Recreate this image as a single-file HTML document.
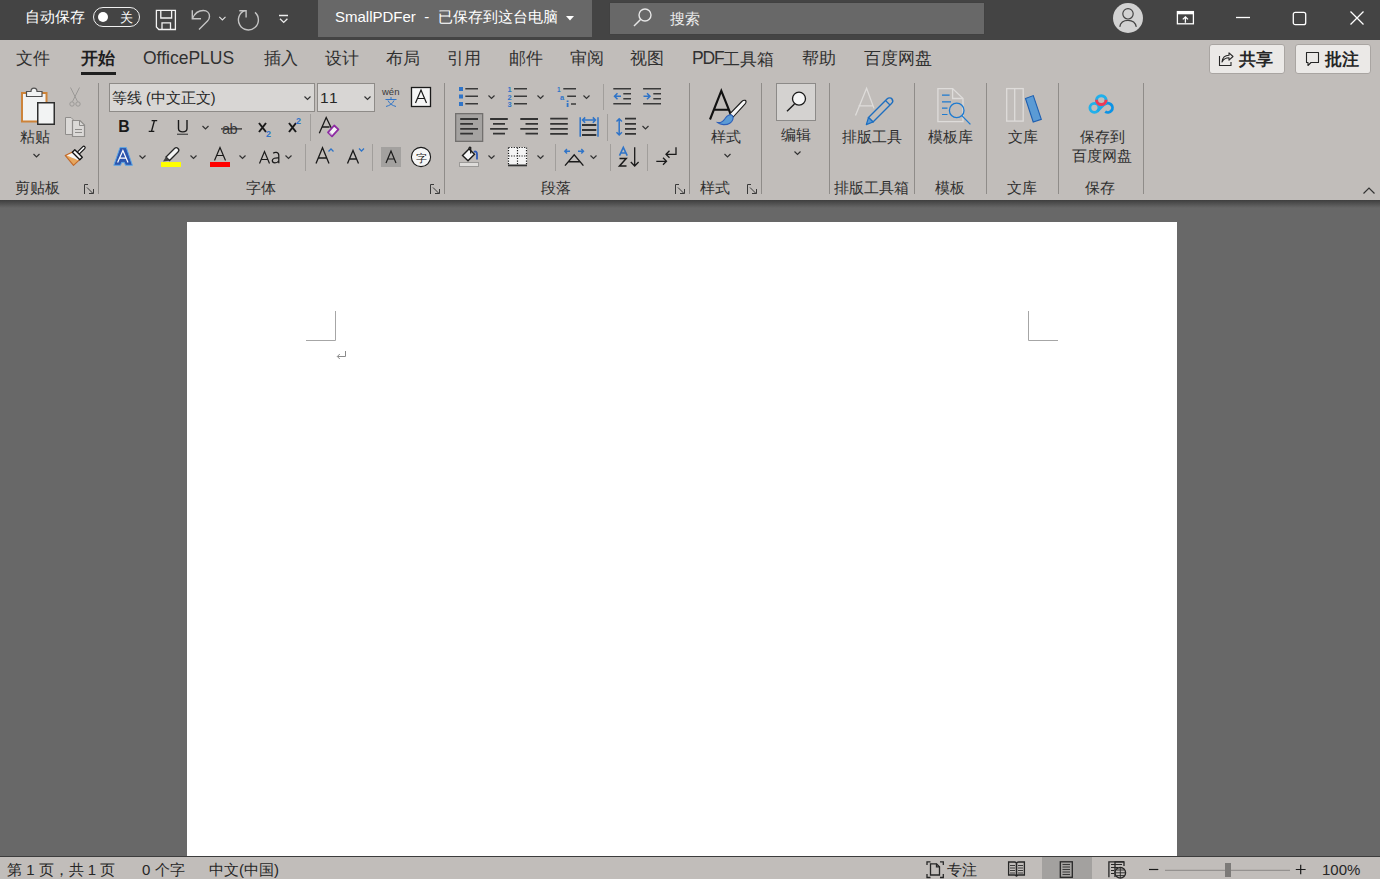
<!DOCTYPE html>
<html><head><meta charset="utf-8">
<style>
*{margin:0;padding:0;box-sizing:border-box}
html,body{width:1380px;height:879px;overflow:hidden;background:#686868}
body{font-family:"Liberation Sans",sans-serif;position:relative;color:#262626}
.a{position:absolute}
.t{position:absolute;white-space:nowrap;line-height:1}
svg{position:absolute;overflow:visible}
#title{left:0;top:0;width:1380px;height:40px;background:#444444}
#tabs{left:0;top:40px;width:1380px;height:38px;background:#c1bdba}
#ribbon{left:0;top:78px;width:1380px;height:122px;background:#c1bdba}
#shadow{left:0;top:200px;width:1380px;height:8px;background:linear-gradient(#3e3e3e,#686868)}
#page{left:187px;top:222px;width:990px;height:634px;background:#fff}
#status{left:0;top:856px;width:1380px;height:23px;background:#c1bdba;border-top:1px solid #3c3c3c}
.tab{font-size:16.7px;color:#303030;top:51px}
.L{font-size:17.5px;position:relative;top:-1px}
.wt{color:#fff}
.sep{position:absolute;width:1px;background:#8f8c89}
.lbl{font-size:15px;color:#303030}
</style></head><body>
<div id="title" class="a"></div>

<!-- TITLE BAR -->
<div class="t wt" style="left:25px;top:9px;font-size:15px">自动保存</div>
<div class="a" style="left:93px;top:7px;width:47px;height:20px;border:1.3px solid #f0f0f0;border-radius:10px"></div>
<div class="a" style="left:98px;top:12px;width:10px;height:10px;border-radius:50%;background:#fff"></div>
<div class="t wt" style="left:120px;top:11px;font-size:13px">关</div>
<div class="a" style="left:318px;top:0;width:274px;height:37px;background:#686868"></div>
<div class="t wt" style="left:335px;top:9px;font-size:15px">SmallPDFer &nbsp;- &nbsp;已保存到这台电脑</div>
<svg style="left:566px;top:16px" width="8" height="5" viewBox="0 0 8 5"><path d="M0 0H8L4 4.5Z" fill="#fff"/></svg>
<div class="a" style="left:610px;top:3px;width:374px;height:31px;background:#686868;box-shadow:0 0 1px #3a3a3a"></div>
<svg style="left:632px;top:8px" width="22" height="22" viewBox="0 0 22 22"><circle cx="13" cy="7" r="6" fill="none" stroke="#e6e6e6" stroke-width="1.4"/><path d="M8.8 11.2L2 18" stroke="#e6e6e6" stroke-width="1.5"/></svg>
<div class="t" style="left:670px;top:11px;font-size:15px;color:#ececec">搜索</div>
<div class="a" style="left:1113px;top:3px;width:30px;height:30px;border-radius:50%;background:#d2d2d2"></div>
<svg style="left:0;top:0" width="1380" height="40" viewBox="0 0 1380 40">
<circle cx="1128" cy="13.8" r="5.2" fill="none" stroke="#444" stroke-width="1.2"/>
<path d="M1119.8 26.8C1120.5 22.5 1124 20.3 1128 20.3C1132 20.3 1135.5 22.5 1136.3 26.8" fill="none" stroke="#444" stroke-width="1.2"/>
<rect x="1177.4" y="11.6" width="16" height="12.2" fill="none" stroke="#fff" stroke-width="1.3"/>
<rect x="1177" y="11" width="17" height="3.3" fill="#fff"/>
<path d="M1185.4 22.8V16.8M1182.8 19.4L1185.4 16.8L1188 19.4" fill="none" stroke="#fff" stroke-width="1.3"/>
</svg>
<svg style="left:1236px;top:16px" width="14" height="3" viewBox="0 0 14 3"><path d="M0 1.5H14" stroke="#fff" stroke-width="1.3"/></svg>
<svg style="left:1292px;top:11px" width="15" height="15" viewBox="0 0 15 15"><rect x="1.3" y="1.3" width="12.4" height="12.4" rx="2" fill="none" stroke="#fff" stroke-width="1.3"/></svg>
<svg style="left:1350px;top:11px" width="14" height="14" viewBox="0 0 14 14"><path d="M0.5 0.5L13.5 13.5M13.5 0.5L0.5 13.5" stroke="#fff" stroke-width="1.3"/></svg>
<div id="tabs" class="a"></div>
<div id="ribbon" class="a"></div>
<!-- TABS -->
<div class="t tab" style="left:16px">文件</div>
<div class="t tab" style="left:81px;font-weight:bold;color:#1e1e1e">开始</div>
<div class="t tab" style="left:143px"><span class="L">OfficePLUS</span></div>
<div class="t tab" style="left:264px">插入</div>
<div class="t tab" style="left:325px">设计</div>
<div class="t tab" style="left:386px">布局</div>
<div class="t tab" style="left:447px">引用</div>
<div class="t tab" style="left:509px">邮件</div>
<div class="t tab" style="left:570px">审阅</div>
<div class="t tab" style="left:630px">视图</div>
<div class="t tab" style="left:692px"><span class="L" style="letter-spacing:-1.2px">PDF</span>工具箱</div>
<div class="t tab" style="left:802px">帮助</div>
<div class="t tab" style="left:864px">百度网盘</div>
<div class="a" style="left:81px;top:72px;width:35px;height:3px;background:#1f1f1f"></div>
<div class="a" style="left:1209px;top:44px;width:76px;height:30px;background:#ebe9e7;border:1px solid #a9a5a2;border-radius:3px"></div>
<div class="a" style="left:1295px;top:44px;width:76px;height:30px;background:#ebe9e7;border:1px solid #a9a5a2;border-radius:3px"></div>
<div class="t" style="left:1239px;top:51px;font-size:16.5px;font-weight:bold;color:#262626">共享</div>
<div class="t" style="left:1325px;top:51px;font-size:16.5px;font-weight:bold;color:#262626">批注</div>


<!-- RIBBON TEXT -->
<div class="a" style="left:109px;top:83px;width:206px;height:29px;background:#d8d6d4;border:1px solid #8e8b88"></div>
<div class="t" style="left:112px;top:91px;font-size:14.5px;color:#262626">等线 (中文正文)</div>
<div class="a" style="left:317px;top:83px;width:58px;height:29px;background:#d8d6d4;border:1px solid #8e8b88"></div>
<div class="t" style="left:320px;top:90px;font-size:15.5px;letter-spacing:1.5px;color:#262626">11</div>

<div class="t lbl" style="left:20px;top:129px">粘贴</div>
<div class="t lbl" style="left:15px;top:180px">剪贴板</div>
<div class="t lbl" style="left:246px;top:180px">字体</div>
<div class="t lbl" style="left:541px;top:180px">段落</div>
<div class="t lbl" style="left:711px;top:129px">样式</div>
<div class="t lbl" style="left:700px;top:180px">样式</div>
<div class="t lbl" style="left:781px;top:127px">编辑</div>
<div class="t lbl" style="left:842px;top:129px">排版工具</div>
<div class="t lbl" style="left:834px;top:180px">排版工具箱</div>
<div class="t lbl" style="left:928px;top:129px">模板库</div>
<div class="t lbl" style="left:935px;top:180px">模板</div>
<div class="t lbl" style="left:1008px;top:129px">文库</div>
<div class="t lbl" style="left:1007px;top:180px">文库</div>
<div class="t lbl" style="left:1080px;top:129px">保存到</div>
<div class="t lbl" style="left:1072px;top:148px">百度网盘</div>
<div class="t lbl" style="left:1085px;top:180px">保存</div>
<div id="shadow" class="a"></div>
<div id="page" class="a"></div>
<div id="status" class="a"></div>
<!-- STATUS TEXT -->
<div class="a" style="left:1042px;top:857px;width:50px;height:22px;background:#a3a19f"></div>
<div class="t" style="left:7px;top:862px;font-size:15px;color:#262626">第 1 页，共 1 页</div>
<div class="t" style="left:142px;top:862px;font-size:15px;color:#262626">0 个字</div>
<div class="t" style="left:209px;top:862px;font-size:15px;color:#262626">中文(中国)</div>
<div class="t" style="left:947px;top:862px;font-size:15px;color:#262626">专注</div>
<div class="t" style="left:1322px;top:862px;font-size:15px;color:#262626">100%</div>
<!--ICONS-->
<svg style="left:0;top:0" width="1380" height="879" viewBox="0 0 1380 879">
<g id="seps" fill="#8f8c89">
<rect x="98" y="83" width="1" height="111"/><rect x="444" y="83" width="1" height="111"/>
<rect x="689" y="83" width="1" height="111"/><rect x="761" y="83" width="1" height="111"/>
<rect x="829" y="83" width="1" height="111"/><rect x="914" y="83" width="1" height="111"/>
<rect x="986" y="83" width="1" height="111"/><rect x="1058" y="83" width="1" height="111"/>
<rect x="1143" y="83" width="1" height="111"/>
</g>
<g fill="#a19e9b">
<rect x="310" y="114" width="1" height="27"/><rect x="305" y="144" width="1" height="27"/><rect x="372" y="144" width="1" height="27"/>
<rect x="603" y="84" width="1" height="26"/><rect x="607" y="114" width="1" height="27"/>
<rect x="555" y="144" width="1" height="27"/><rect x="610" y="144" width="1" height="27"/><rect x="647" y="144" width="1" height="27"/>
</g>
<!-- chevrons -->
<g fill="none" stroke="#333" stroke-width="1.2">
<path d="M33.5 154L36.5 157L39.5 154"/>
<path d="M202.5 126L205.5 129L208.5 126"/>
<path d="M139.5 155.5L142.5 158.5L145.5 155.5"/>
<path d="M190.5 155.5L193.5 158.5L196.5 155.5"/>
<path d="M239.5 155.5L242.5 158.5L245.5 155.5"/>
<path d="M285.5 155.5L288.5 158.5L291.5 155.5"/>
<path d="M304.5 96.5L307.5 99.5L310.5 96.5"/>
<path d="M364.5 96.5L367.5 99.5L370.5 96.5"/>
<path d="M488.5 95.5L491.5 98.5L494.5 95.5"/>
<path d="M537.5 95.5L540.5 98.5L543.5 95.5"/>
<path d="M583.5 95.5L586.5 98.5L589.5 95.5"/>
<path d="M642.5 126L645.5 129L648.5 126"/>
<path d="M488.5 155.5L491.5 158.5L494.5 155.5"/>
<path d="M537.5 155.5L540.5 158.5L543.5 155.5"/>
<path d="M590.5 155.5L593.5 158.5L596.5 155.5"/>
<path d="M724.5 154L727.5 157L730.5 154"/>
<path d="M794.5 151.5L797.5 154.5L800.5 151.5"/>
<path d="M1363.5 193.5L1369 188L1374.5 193.5"/>
</g>
<!-- launchers -->
<g fill="none" stroke="#3a3a3a" stroke-width="1">
<path d="M84.5 194V184.5H88M87 187.5L93 193.5M93.5 189V193.5H89"/>
<path d="M430.5 194V184.5H434M433 187.5L439 193.5M439.5 189V193.5H435"/>
<path d="M675.5 194V184.5H679M678 187.5L684 193.5M684.5 189V193.5H680"/>
<path d="M747.5 194V184.5H751M750 187.5L756 193.5M756.5 189V193.5H752"/>
</g>
<!-- paste -->
<rect x="22" y="93" width="24.5" height="28.5" fill="#f2f3f3" stroke="#cd8339" stroke-width="2"/>
<path d="M26.5 91.5H31C31 87 37 87 37 91.5H42V96.5H26.5Z" fill="#f2f3f3" stroke="#505050" stroke-width="1.2"/>
<rect x="37.75" y="102.75" width="16.5" height="21.5" fill="#f2f3f3" stroke="#2e2e2e" stroke-width="1.5"/>
<!-- scissors -->
<g fill="none" stroke="#9b9997" stroke-width="1">
<path d="M70.5 87.5L77.5 101.5M79.5 87.5L72.5 101.5"/><circle cx="72" cy="104" r="2.2"/><circle cx="78" cy="104" r="2.2"/>
</g>
<!-- copy -->
<path d="M65.5 117.5H71L73 119.5V134.5H65.5Z" fill="#dbd9d7" stroke="#8f8d8b" stroke-width="1"/>
<path d="M72.5 120.5H80L84.5 125V136.5H72.5Z" fill="#dbd9d7" stroke="#8f8d8b" stroke-width="1.2"/>
<path d="M79.5 120.5V125.5H84.5" fill="none" stroke="#8f8d8b" stroke-width="1"/>
<path d="M75 129.5H82M75 132.5H82" stroke="#8f8d8b" stroke-width="1"/>
<!-- format painter -->
<path d="M65.2 155.4L73 151.8L80.5 158.9L73.5 165.4Z" fill="#e6a65e" stroke="#c2692a" stroke-width="1.1" stroke-linejoin="round"/>
<path d="M66.8 155.6L73.2 152.6L79.6 158.6L77.8 160.2C74 158.5 70 157 66.8 155.6Z" fill="#f6f6f6"/>
<path d="M83.8 147.6L79 152.4" stroke="#111" stroke-width="3.8" stroke-linecap="round"/>
<path d="M83.8 147.6L79 152.4" stroke="#f4f4f4" stroke-width="1.5" stroke-linecap="round"/>
<path d="M74.8 149.8L82.3 157.3L79.8 159.8L72.3 152.3Z" fill="#f4f4f4" stroke="#111" stroke-width="1.3" stroke-linejoin="round"/>
<!-- FONT GROUP -->
<g font-family="Liberation Sans" >
<text x="118.3" y="132" font-size="15.8" font-weight="bold" fill="#1a1a1a">B</text>
<path d="M151.6 120.6H157.2M148.7 131.4H154.3M154.4 120.6L151.5 131.4" fill="none" stroke="#1a1a1a" stroke-width="1.4"/>
<path d="M178.5 120V128.5C178.5 133 187 133 187 128.5V120" fill="none" stroke="#1a1a1a" stroke-width="1.4"/>
<rect x="177" y="133.6" width="11" height="1.4" fill="#555"/>
<text x="222" y="133.5" font-size="14.5" fill="#3a3a3a" letter-spacing="-0.5">ab</text>
<rect x="221" y="128.3" width="21" height="1.2" fill="#262626"/>
<path d="M259 123L266 132M266 123L259 132" stroke="#1a1a1a" stroke-width="2"/>
<text x="266" y="137" font-size="9" font-weight="bold" fill="#2f74c8">2</text>
<path d="M289 123L296 132M296 123L289 132" stroke="#1a1a1a" stroke-width="2"/>
<text x="296" y="123.5" font-size="9" font-weight="bold" fill="#2f74c8">2</text>
<path d="M319.3 133.2L326.2 117.5L332 129.5M322 127H329.5" fill="none" stroke="#1a1a1a" stroke-width="1.3"/>
<path d="M328 132.3L334.2 125.5L338.4 129.4L332 136.3Z" fill="#f4f4f4" stroke="#8e2aa3" stroke-width="1.8" stroke-linejoin="round"/><path d="M329.5 132.5L332 135" stroke="#c9a0d6" stroke-width="1.2"/>
<!-- wen -->
<text x="382" y="95" font-size="9.5" fill="#3a3a3a">wén</text>
<path d="M385.5 99.5H396.5M391 97V99.5M388 100.5C389.5 104 392.5 105.5 396 106.5M394 100.5C392.5 104 389.5 105.5 386 106.5" fill="none" stroke="#2f74c8" stroke-width="1"/>
<!-- char border -->
<rect x="411.5" y="87.5" width="19" height="19" fill="#f6f6f6" stroke="#1a1a1a" stroke-width="1.3"/>
<path d="M415.5 103L421 90L426.5 103M417.5 98.5H424.5" fill="none" stroke="#1a1a1a" stroke-width="1.2"/>
<!-- text effect A -->
<path d="M113.8 165.3L120 147.6H126.3L132.4 165.3H125.4L124.4 162.4H121.6L120.6 165.3Z" fill="#2c55ad" stroke="#5fa8e6" stroke-width="1"/>
<path d="M117.6 162.5L122.9 150.5L128 162.5M119.6 158.1H126.2" fill="none" stroke="#fff" stroke-width="1.2"/>
<!-- highlight -->
<path d="M166 157L174.5 148.5C175.5 147.5 177 147.5 178 148.5C179 149.5 179 151 178 152L169.5 160.5Z" fill="#f4f4f4" stroke="#262626" stroke-width="1.3"/>
<path d="M166 157L169.5 160.5L167 161L163 161.5L165.5 157.5Z" fill="#444"/>
<rect x="161" y="162" width="20" height="5" fill="#ffff00"/>
<!-- font color -->
<path d="M214.5 160.5L220 147.5L225.5 160.5M216.5 155.5H223.5" fill="none" stroke="#1a1a1a" stroke-width="1.2"/>
<rect x="210" y="162" width="20" height="5" fill="#ff0000"/>
<!-- Aa -->
<path d="M259.5 163.5L264.5 151.5L269.5 163.5M261.3 159.5H267.7" fill="none" stroke="#1a1a1a" stroke-width="1.2"/>
<path d="M273.2 153.3C274.6 152 278.8 151.6 278.8 155.5V163.3M278.8 157.8C275.5 157.6 272.3 158.3 272.3 160.6C272.3 163.8 277.2 163.6 278.8 160.8" fill="none" stroke="#1a1a1a" stroke-width="1.25"/>
<!-- grow/shrink -->
<path d="M316 163.5L322.5 147.8L329 163.5M318.5 158H326.5" fill="none" stroke="#1a1a1a" stroke-width="1.3"/>
<path d="M328.5 151.5L331 149L333.5 151.5" fill="none" stroke="#2f74c8" stroke-width="1.3"/>
<path d="M347.5 163.5L353 150.5L358.5 163.5M349.7 159H356.3" fill="none" stroke="#1a1a1a" stroke-width="1.3"/>
<path d="M359 148.5L361.5 151L364 148.5" fill="none" stroke="#2f74c8" stroke-width="1.3"/>
<!-- shaded A -->
<rect x="381" y="147" width="20" height="20" fill="#a3a19f"/>
<path d="M386 163L391 151L396 163M387.8 159H394.2" fill="none" stroke="#1a1a1a" stroke-width="1.2"/>
<!-- enclosed -->
<circle cx="421" cy="157" r="9.6" fill="#f6f6f6" stroke="#1a1a1a" stroke-width="1.1"/>
<text x="421" y="162" font-size="11" text-anchor="middle" fill="#1a1a1a">字</text>
</g>
<!-- PARAGRAPH GROUP -->
<g fill="#2f74c8">
<rect x="459" y="87" width="4" height="4"/><rect x="459" y="94.5" width="4" height="4"/><rect x="459" y="102" width="4" height="4"/>
</g>
<g stroke="#3a3a3a" stroke-width="1.5">
<path d="M465.3 88.8H478M465.3 96.3H478M465.3 103.8H478"/>
<path d="M514 88.8H527M514 96.3H527M514 103.8H527"/>
<path d="M563.3 88.8H576M567.2 96.3H576M571 103.9H576"/>
</g>
<g font-family="Liberation Sans" font-weight="bold" fill="#2f74c8" font-size="7.5">
<text x="507.5" y="92">1</text><text x="507.5" y="99.5">2</text><text x="507.5" y="107">3</text>
<text x="557" y="92" font-size="6.5">1</text><text x="560" y="100" font-size="7.5">a</text>
</g>
<rect x="566.7" y="100.5" width="1.8" height="1.5" fill="#2f74c8"/><rect x="566.7" y="103" width="1.8" height="4" fill="#2f74c8"/>
<!-- indents -->
<g stroke="#3a3a3a" stroke-width="1.6">
<path d="M613.3 88.8H631M623.3 93.7H631M623.3 98.7H631M613.3 103.7H631"/>
<path d="M643.1 88.8H661M653.3 93.7H661M653.3 98.7H661M643.1 103.7H661"/>
</g>
<g fill="none" stroke="#2f74c8" stroke-width="1.5">
<path d="M621 96.3H614.5M617.5 93.3L614.5 96.3L617.5 99.3"/>
<path d="M643.5 96.3H650M647 93.3L650 96.3L647 99.3"/>
</g>
<!-- align -->
<rect x="455.65" y="113.65" width="27" height="27.7" fill="#a5a3a1" stroke="#72706e" stroke-width="1.3"/>
<g stroke="#333" stroke-width="1.8">
<path d="M460.2 119H478M460.2 123.8H473M460.2 128.8H478M460.2 133.7H473"/>
<path d="M490.1 119H507.8M493 123.8H505M490.1 128.8H507.8M493 133.7H505"/>
<path d="M520.3 119H538M525.5 123.8H538M520.3 128.8H538M525.5 133.7H538"/>
<path d="M550.2 118.7H567.8M550.2 123.9H567.8M550.2 128.8H567.8M550.2 133.9H567.8"/>
<path d="M582 125H596.3M582 130H596.3M582 135H596.3"/>
<path d="M625 118.7H636M625 123.9H636M625 128.8H636M625 133.9H636"/>
</g>
<g fill="none" stroke="#2f74c8" stroke-width="1.5">
<path d="M580.2 117.2V136.8M598 117.2V136.8"/>
<path d="M582.5 120.1H595.5M585.2 117.4L582.5 120.1L585.2 122.8M592.8 117.4L595.5 120.1L592.8 122.8"/>
<path d="M619.2 119V134.8M616.5 121.5L619.2 118.8L621.9 121.5M616.5 132.3L619.2 135L621.9 132.3"/>
</g>
<!-- shading -->
<path d="M462.5 155.6L469 149L474.5 154.2L468 160.8Z" fill="#f6f6f6" stroke="#1a1a1a" stroke-width="1.4"/>
<path d="M469 149.5C468.8 147 470 146.8 470.7 147.5V153.5" fill="none" stroke="#1a1a1a" stroke-width="1.3"/>
<path d="M474 152C475.5 150.8 477 152 477 154V159.5" fill="none" stroke="#2d58b5" stroke-width="1.8"/>
<rect x="459.5" y="162.5" width="19" height="4" fill="#dedcda" stroke="#9c9a98" stroke-width="1"/>
<!-- borders -->
<rect x="508" y="147" width="19" height="18" fill="#f4f4f4"/>
<g fill="none" stroke="#1a1a1a" stroke-width="1.2" stroke-dasharray="1.2 1.4">
<path d="M508.5 147.5H526.5M508.5 147.5V164.5M526.5 147.5V164.5M517.5 147.5V164.5M508.5 156H526.5"/>
</g>
<rect x="508" y="164.5" width="19" height="1.8" fill="#333"/>
<!-- char spacing -->
<path d="M565 165.6L574.2 154.8L583.4 165.6M568.3 161.8H580" fill="none" stroke="#1a1a1a" stroke-width="1.4"/>
<g fill="none" stroke="#2f74c8" stroke-width="1.4">
<path d="M570 151.2H564.8M567 149L564.8 151.2L567 153.4"/>
<path d="M578 151.2H583.5M581.3 149L583.5 151.2L581.3 153.4"/>
</g>
<!-- sort -->
<path d="M619.5 155.7L623.3 147.5L627.2 155.7M620.8 153H625.8" fill="none" stroke="#2f74c8" stroke-width="1.6"/>
<path d="M619.5 158.6H626.2L619.5 166H626.5" fill="none" stroke="#1a1a1a" stroke-width="1.5"/>
<path d="M634.7 147.2V166M630.8 162L634.7 166L638.6 162" fill="none" stroke="#1a1a1a" stroke-width="1.3"/>
<!-- show marks -->
<path d="M676 147.2V154.3H666M669.5 150.8L666 154.3L669.5 157.8" fill="none" stroke="#1a1a1a" stroke-width="1.3"/>
<path d="M656.3 161.3H666.5M663 157.8L666.5 161.3L663 164.8" fill="none" stroke="#1a1a1a" stroke-width="1.3"/>
<!-- STYLES -->
<path d="M710 119.5L721.3 90.8L731 115M713.8 109.7H728.3" fill="none" stroke="#111" stroke-width="2.1"/>
<path d="M729.8 113.8L741.8 101.5C744.2 99.2 747.2 100.2 745.6 103.3L733.2 117Z" fill="#f6f6f6" stroke="#1a1a1a" stroke-width="1.1" stroke-linejoin="round"/>
<path d="M717.6 122.6C721 123 723.8 120.6 725.3 118.2C727 115.3 730 113.8 732.4 115.6C734 117.6 733 121.2 729.8 123.2C726.2 125.4 720.6 125 717.6 122.6Z" fill="#5b9bd5" stroke="#2d5fb8" stroke-width="1.1"/>
<!-- EDITING -->
<rect x="776.5" y="83.5" width="39" height="37" fill="#d4d2d0" stroke="#8c8a88" stroke-width="1"/>
<circle cx="799" cy="98.7" r="6.5" fill="#f4f4f4" stroke="#1a1a1a" stroke-width="1.3"/>
<path d="M794.5 104L787 111.3" stroke="#1a1a1a" stroke-width="1.4"/>
<!-- PAIBAN -->
<path d="M855.5 115.5L866.6 88.3L874 108.4M858.5 105.8H873" fill="none" stroke="#dedcda" stroke-width="1.3"/>
<path d="M868.5 117.5L887 99C888.5 97.5 891 97.5 892 99C893 100.5 892.8 102.5 891.5 103.5L873 122Z" fill="none" stroke="#1d6ec0" stroke-width="1.4"/>
<path d="M868.5 117.5L873 122L866.3 124.6Z" fill="#5b9bd5" stroke="#1d6ec0" stroke-width="1.2" stroke-linejoin="round"/>
<path d="M885.5 100.5L890 105" stroke="#1d6ec0" stroke-width="1.2"/>
<!-- MOBAN -->
<path d="M937.9 88.6H952.6L963 98.5V121.6H937.9Z" fill="none" stroke="#dedcda" stroke-width="1.3"/>
<path d="M952.6 88.6V98.5H963" fill="none" stroke="#dedcda" stroke-width="1.3"/>
<g stroke="#1d7ad0" stroke-width="1.2">
<path d="M942 95.2H949.6M942 101.8H951M942 108.2H947.5M942 114.5H947.5"/>
</g>
<circle cx="956.7" cy="110.4" r="7.3" fill="none" stroke="#1d7ad0" stroke-width="1.3"/>
<path d="M961.8 115.6L970.4 124.4" stroke="#1d7ad0" stroke-width="1.3"/>
<!-- WENKU -->
<rect x="1006.7" y="88.6" width="16.5" height="32.5" fill="none" stroke="#dedcda" stroke-width="1.3"/>
<path d="M1014.7 88.6V121.1" stroke="#dedcda" stroke-width="1.3"/>
<path d="M1025.5 98.5L1033.3 95.6L1041.3 119.3L1033.2 122Z" fill="#5b9bd5" stroke="#1e5fb0" stroke-width="1.1"/>
<!-- BAIDU -->
<g fill="none">
<circle cx="1094.4" cy="107.8" r="4.5" stroke="#22b0ea" stroke-width="2.8"/>
<path d="M1097.3 111.2L1103.8 104.6" stroke="#1aa8ea" stroke-width="2.8"/>
<path d="M1105.2 111.6A4.6 4.6 0 1 0 1104.6 104.6" stroke="#0b93e6" stroke-width="2.8"/>
<circle cx="1101.3" cy="100.5" r="4.8" stroke="#1fb0ec" stroke-width="3"/>
<path d="M1096.5 99.8A4.8 4.8 0 0 0 1106.1 99.8" stroke="#ee3a55" stroke-width="3"/>
</g>
<!-- PAGE MARKS -->
<path d="M306 340.5H335.5V311" fill="none" stroke="#a6a6a6" stroke-width="1"/>
<path d="M1028.5 311V340.5H1058" fill="none" stroke="#a6a6a6" stroke-width="1"/>
<path d="M345.5 351V356.5H337.5M339.8 354L337.3 356.5L339.8 359" fill="none" stroke="#8a8a8a" stroke-width="1"/>
<!-- STATUS ICONS -->
<g fill="none" stroke="#262626" stroke-width="1.3">
<path d="M927 865V861.8H930.5M940 861.8H943.3V865M943.3 874V877.5H940M930.5 877.5H927V874"/>
<path d="M930.5 863.8H936.5L939.5 866.8V875H930.5Z"/>
<path d="M936.5 863.8V866.8H939.5"/>
</g>
<g fill="none" stroke="#262626" stroke-width="1.3">
<path d="M1008.6 862H1014.5C1015.5 862 1016.5 863 1016.5 864V876.5C1016.5 875.5 1015.5 875 1014.5 875H1008.6Z"/>
<path d="M1024.4 862H1018.5C1017.5 862 1016.5 863 1016.5 864V876.5C1016.5 875.5 1017.5 875 1018.5 875H1024.4Z"/>
</g>
<g stroke="#3a3a3a" stroke-width="1"><path d="M1010 865.5H1015M1010 868H1015M1010 870.5H1015M1010 873H1015M1018 865.5H1023M1018 868H1023M1018 870.5H1023M1018 873H1023"/></g>
<rect x="1060.3" y="861.8" width="12" height="15.5" fill="none" stroke="#262626" stroke-width="1.3"/>
<g stroke="#3a3a3a" stroke-width="1"><path d="M1062.5 864.5H1070M1062.5 867H1070M1062.5 869.5H1070M1062.5 872H1070M1062.5 874.5H1070"/></g>
<path d="M1115 877V861.8H1124V866" fill="none" stroke="#262626" stroke-width="1.3"/>
<path d="M1108.9 877.2V861.8H1124" fill="none" stroke="#262626" stroke-width="1.3"/>
<g stroke="#262626" stroke-width="1"><path d="M1111 864.5H1122M1111 867.5H1118M1111 870.5H1114M1111 873.5H1114"/></g>
<circle cx="1120.3" cy="872.8" r="5.3" fill="#c1bdba" stroke="#262626" stroke-width="1.3"/>
<path d="M1120.3 867.5V878M1115 872.8H1125.6M1116.5 870H1124M1116.5 875.6H1124" stroke="#262626" stroke-width="0.9"/>
<path d="M1149 869.5H1158.3" stroke="#1a1a1a" stroke-width="1.2"/>
<rect x="1165" y="869.8" width="125" height="1" fill="#8a8886"/>
<rect x="1225" y="863" width="6" height="14" fill="#7c7a78"/>
<path d="M1295.8 869.5H1305.6M1300.7 864.8V874.3" stroke="#1a1a1a" stroke-width="1.2"/>
<!-- TITLEBAR ICONS -->
<path d="M156.4 10.4H175.4V29.5H158.8L156.4 27Z" fill="none" stroke="#f2f2f2" stroke-width="1.3"/>
<path d="M160.8 10.4V18H171.6V10.4M162 29.5V22.8H170.5V29.5" fill="none" stroke="#f2f2f2" stroke-width="1.3"/>
<path d="M192.5 18.5C195 12.5 199 10.5 203.3 10.5C207 10.5 209.5 13 209.5 16.3C209.5 18.3 208.7 19.8 207.5 21L199 29.5" fill="none" stroke="#c4c4c4" stroke-width="1.4"/>
<path d="M192.3 10.3V18.7H201" fill="none" stroke="#c4c4c4" stroke-width="1.4"/>
<path d="M219.3 16.8L222.4 19.9L225.5 16.8" fill="none" stroke="#e0e0e0" stroke-width="1.1"/>
<path d="M255 12.4A10 10 0 1 1 244.6 10.7" fill="none" stroke="#c4c4c4" stroke-width="1.4"/>
<path d="M239.3 10.8H246.1V17.6" fill="none" stroke="#c4c4c4" stroke-width="1.4"/>
<path d="M279 15.5H288M280 18.8L283.7 22.4L287.4 18.8" fill="none" stroke="#ececec" stroke-width="1.3"/>
<!-- SHARE / COMMENT ICONS -->
<path d="M1219.5 56V65.5H1231V62" fill="none" stroke="#262626" stroke-width="1.1"/>
<path d="M1222 62C1222.5 57.5 1225 55.2 1229 55.2V52.8L1233 56.5L1229 60.2V57.8C1226 57.8 1223.5 59 1222 62Z" fill="none" stroke="#262626" stroke-width="1.1" stroke-linejoin="round"/>
<path d="M1306.5 52.5H1318.5V62.5H1311L1308 65.5V62.5H1306.5Z" fill="none" stroke="#262626" stroke-width="1.1" stroke-linejoin="round"/>
</svg>

</body></html>
